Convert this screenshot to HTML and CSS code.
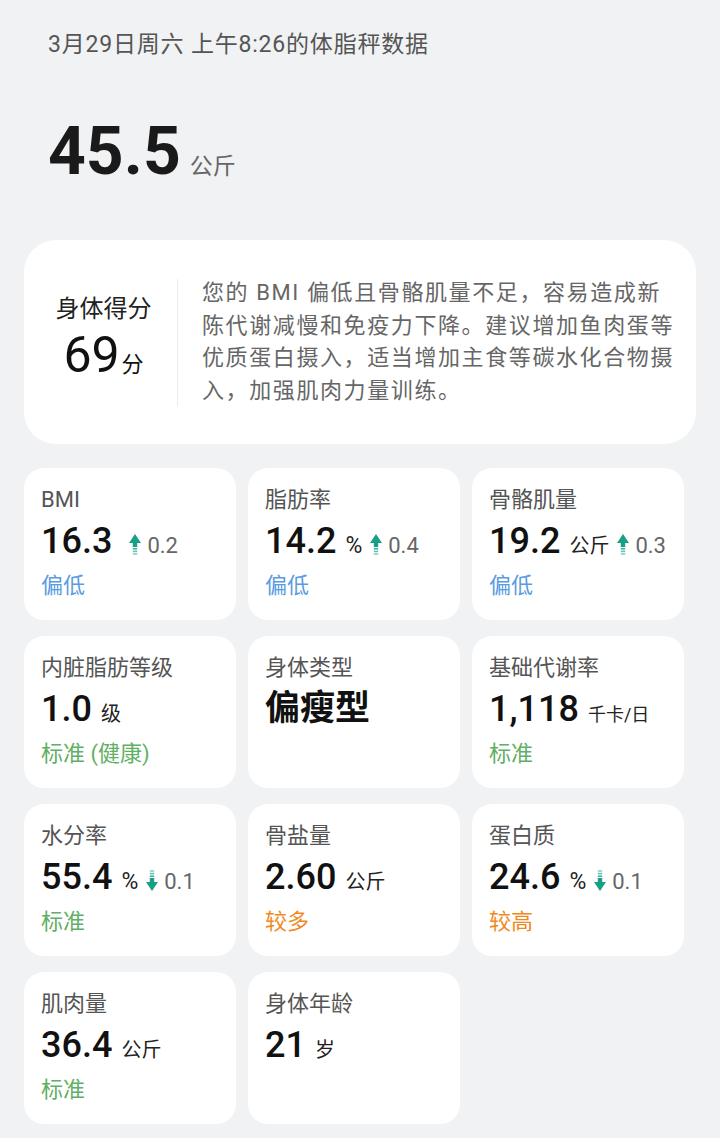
FILE: index.html
```html
<!DOCTYPE html>
<html lang="zh-CN">
<head>
<meta charset="UTF-8">
<meta name="viewport" content="width=device-width, initial-scale=1.0">
<title>体脂秤数据</title>
<link rel="stylesheet" href="styles.css">
</head>
<body>
<div class="page">
    <div class="date">3月29日周六 上午8:26的体脂秤数据</div>
    <div class="weight">
        <span class="weight-num">45.5</span>
        <span class="weight-unit">公斤</span>
    </div>

    <div class="score-card">
        <div class="score">
            <div class="score-label">身体得分</div>
            <div class="score-val">69<span>分</span></div>
        </div>
        <div class="divider"></div>
        <p class="advice">您的 BMI 偏低且骨骼肌量不足，容易造成新陈代谢减慢和免疫力下降。建议增加鱼肉蛋等优质蛋白摄入，适当增加主食等碳水化合物摄入，加强肌肉力量训练。</p>
    </div>

    <div class="grid">
        <div class="metric">
            <div class="m-label">BMI</div>
            <div class="m-value"><span class="num">16.3</span>
                <span class="delta"><svg class="arrow" width="12" height="21" viewBox="0 0 12 21"><polygon points="6,0 12,9 0,9" /><rect x="3.8" y="8.5" width="4.4" height="4.5" /><rect x="3.8" y="14" width="4.4" height="1.6" opacity=".8" /><rect x="3.8" y="16.6" width="4.4" height="1.6" opacity=".65" /><rect x="3.8" y="19.2" width="4.4" height="1.6" opacity=".5" /></svg>0.2</span>
            </div>
            <div class="m-status blue">偏低</div>
        </div>
        <div class="metric">
            <div class="m-label">脂肪率</div>
            <div class="m-value"><span class="num">14.2</span><span class="unit pct">%</span>
                <span class="delta"><svg class="arrow" width="12" height="21" viewBox="0 0 12 21"><polygon points="6,0 12,9 0,9" /><rect x="3.8" y="8.5" width="4.4" height="4.5" /><rect x="3.8" y="14" width="4.4" height="1.6" opacity=".8" /><rect x="3.8" y="16.6" width="4.4" height="1.6" opacity=".65" /><rect x="3.8" y="19.2" width="4.4" height="1.6" opacity=".5" /></svg>0.4</span>
            </div>
            <div class="m-status blue">偏低</div>
        </div>
        <div class="metric">
            <div class="m-label">骨骼肌量</div>
            <div class="m-value"><span class="num">19.2</span><span class="unit">公斤</span>
                <span class="delta"><svg class="arrow" width="12" height="21" viewBox="0 0 12 21"><polygon points="6,0 12,9 0,9" /><rect x="3.8" y="8.5" width="4.4" height="4.5" /><rect x="3.8" y="14" width="4.4" height="1.6" opacity=".8" /><rect x="3.8" y="16.6" width="4.4" height="1.6" opacity=".65" /><rect x="3.8" y="19.2" width="4.4" height="1.6" opacity=".5" /></svg>0.3</span>
            </div>
            <div class="m-status blue">偏低</div>
        </div>

        <div class="metric">
            <div class="m-label">内脏脂肪等级</div>
            <div class="m-value"><span class="num">1.0</span><span class="unit">级</span></div>
            <div class="m-status green">标准 (健康)</div>
        </div>
        <div class="metric">
            <div class="m-label">身体类型</div>
            <div class="m-value"><span class="type">偏瘦型</span></div>
        </div>
        <div class="metric">
            <div class="m-label">基础代谢率</div>
            <div class="m-value"><span class="num">1,118</span><span class="unit small">千卡/日</span></div>
            <div class="m-status green">标准</div>
        </div>

        <div class="metric">
            <div class="m-label">水分率</div>
            <div class="m-value"><span class="num">55.4</span><span class="unit pct">%</span>
                <span class="delta"><svg class="arrow" width="12" height="21" viewBox="0 0 12 21"><rect x="3.8" y="0.2" width="4.4" height="1.6" opacity=".5" /><rect x="3.8" y="2.8" width="4.4" height="1.6" opacity=".65" /><rect x="3.8" y="5.4" width="4.4" height="1.6" opacity=".8" /><rect x="3.8" y="8" width="4.4" height="4.5" /><polygon points="0,12 12,12 6,21" /></svg>0.1</span>
            </div>
            <div class="m-status green">标准</div>
        </div>
        <div class="metric">
            <div class="m-label">骨盐量</div>
            <div class="m-value"><span class="num">2.60</span><span class="unit">公斤</span></div>
            <div class="m-status orange">较多</div>
        </div>
        <div class="metric">
            <div class="m-label">蛋白质</div>
            <div class="m-value"><span class="num">24.6</span><span class="unit pct">%</span>
                <span class="delta"><svg class="arrow" width="12" height="21" viewBox="0 0 12 21"><rect x="3.8" y="0.2" width="4.4" height="1.6" opacity=".5" /><rect x="3.8" y="2.8" width="4.4" height="1.6" opacity=".65" /><rect x="3.8" y="5.4" width="4.4" height="1.6" opacity=".8" /><rect x="3.8" y="8" width="4.4" height="4.5" /><polygon points="0,12 12,12 6,21" /></svg>0.1</span>
            </div>
            <div class="m-status orange">较高</div>
        </div>

        <div class="metric">
            <div class="m-label">肌肉量</div>
            <div class="m-value"><span class="num">36.4</span><span class="unit">公斤</span></div>
            <div class="m-status green">标准</div>
        </div>
        <div class="metric">
            <div class="m-label">身体年龄</div>
            <div class="m-value"><span class="num">21</span><span class="unit">岁</span></div>
        </div>
    </div>
</div>
</body>
</html>
```

FILE: styles.css
```css
body{
    margin: 0;
    background-color: #f1f2f4;
    font-family: Roboto, "Noto Sans CJK SC", sans-serif;
    color: #1a1a1a;
}
.page{
    padding: 0 24px 14px;
}

/* 상단 날짜, 체중 */
.date{
    margin: 30px 0 0 24px;
    font-size: 23px;
    line-height: 30px;
    letter-spacing: 0.8px;
    color: #555;
}
.weight{
    display: flex;
    align-items: baseline;
    margin: 52px 0 0 24px;
    height: 80px;
}
.weight-num{
    font-size: 66px;
    font-weight: 700;
    line-height: 80px;
    color: #1a1a1a;
}
.weight-unit{
    margin-left: 9px;
    font-size: 23px;
    color: #666;
}

/* 신체 점수 카드 */
.score-card{
    display: flex;
    align-items: center;
    box-sizing: border-box;
    height: 204px;
    margin-top: 48px;
    padding-right: 20px;
    background-color: #fff;
    border-radius: 32px;
}
.score{
    flex: 0 0 153px;
    box-sizing: border-box;
    padding: 4px 0 0 6px;
    text-align: center;
}
.score-label{
    font-size: 24px;
    line-height: 32px;
    color: #222;
}
.score-val{
    font-size: 50px;
    line-height: 60px;
    color: #111;
}
.score-val span{
    margin-left: 2px;
    font-size: 22px;
}
.divider{
    flex: 0 0 1px;
    height: 127px;
    background-color: #ececec;
}
.advice{
    flex: 1;
    margin: 0 0 0 24px;
    font-size: 22px;
    line-height: 32.5px;
    letter-spacing: 1.6px;
    color: #666;
}

/* 지표 카드 */
.grid{
    display: grid;
    grid-template-columns: repeat(3, 212px);
    grid-auto-rows: 152px;
    column-gap: 12px;
    row-gap: 16px;
    margin-top: 24px;
}
.metric{
    box-sizing: border-box;
    padding: 16px 17px;
    background-color: #fff;
    border-radius: 20px;
}
.m-label{
    font-size: 22px;
    line-height: 32px;
    color: #555;
}
.m-value{
    display: flex;
    align-items: baseline;
    height: 50px;
    line-height: 50px;
    white-space: nowrap;
}
.m-value > span{
    flex-shrink: 0;
}
.num{
    margin-right: 9px;
    font-size: 36px;
    font-weight: 500;
    color: #111;
}
.unit{
    font-size: 20px;
    color: #222;
}
.unit.pct{
    font-size: 23px;
}
.unit.small{
    font-size: 18px;
}
.type{
    font-size: 35px;
    font-weight: 700;
    color: #111;
}
.delta{
    display: flex;
    align-items: baseline;
    margin-left: 8px;
    font-size: 22px;
    color: #666;
}
.arrow{
    margin-right: 6px;
    fill: #17a083;
    position: relative;
    top: 2px;
}
.m-status{
    font-size: 22px;
    line-height: 40px;
}
.blue{ color: #5b9be2; }
.green{ color: #5fb064; }
.orange{ color: #ef8a22; }
```
